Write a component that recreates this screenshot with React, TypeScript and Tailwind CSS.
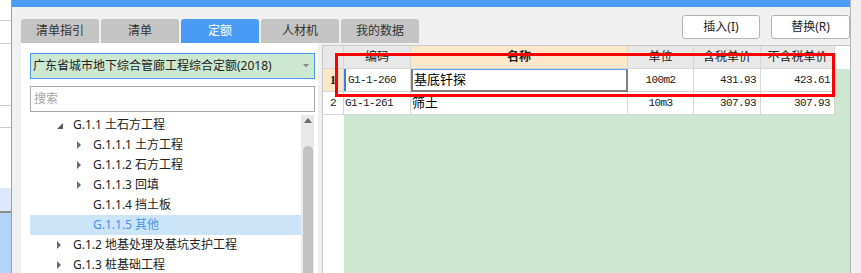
const tabs = ['清单指引', '清单', '定额', '人材机', '我的数据'];

type TreeRow = { level: 1 | 2; arrow: 'open' | 'closed' | 'none'; label: string; selected?: boolean };

const treeRows: TreeRow[] = [
  { level: 1, arrow: 'open', label: 'G.1.1 土石方工程' },
  { level: 2, arrow: 'closed', label: 'G.1.1.1 土方工程' },
  { level: 2, arrow: 'closed', label: 'G.1.1.2 石方工程' },
  { level: 2, arrow: 'closed', label: 'G.1.1.3 回填' },
  { level: 2, arrow: 'none', label: 'G.1.1.4 挡土板' },
  { level: 2, arrow: 'none', label: 'G.1.1.5 其他', selected: true },
  { level: 1, arrow: 'closed', label: 'G.1.2 地基处理及基坑支护工程' },
  { level: 1, arrow: 'closed', label: 'G.1.3 桩基础工程' },
];

const mono = "font-['Liberation_Mono',monospace] text-[11px] tracking-[-0.6px]";

function Arrow({ kind }: { kind: TreeRow['arrow'] }) {
  if (kind === 'open')
    return (
      <svg width="6" height="6" viewBox="0 0 6 6" className="mt-[1px]">
        <polygon points="6,0 6,6 0,6" fill="#5a5a5a" />
      </svg>
    );
  if (kind === 'closed')
    return (
      <svg width="5" height="8" viewBox="0 0 5 8">
        <polygon points="0,0 4,4 0,8" fill="#6a6a6a" />
      </svg>
    );
  return null;
}

export default function App() {
  return (
    <div className="relative flex h-[273px] w-[861px] overflow-hidden bg-[#f0f0f0] font-['Noto_Sans','Noto_Sans_CJK_SC',sans-serif] text-[12px] text-[#222]">
      {/* left edge of the window behind */}
      <div className="flex w-[12px] shrink-0 flex-col border-r border-[#a0a0a0] bg-white">
        <div className="h-[21px] border-b border-[#cdcdcd]" />
        <div className="h-[23px] border-b border-[#cdcdcd]" />
        <div className="h-[62px] border-b border-[#cdcdcd]" />
        <div className="h-[22px] border-b border-[#cdcdcd]" />
        <div className="h-[60px]" />
        <div className="h-[23px] bg-[#dde9fa]" />
        <div className="h-[2px] bg-[#8c8c8c]" />
        <div className="flex-1 bg-[#b5d3f7]" />
      </div>

      <main className="flex min-w-0 flex-1 flex-col">
        <div className="h-[7px] bg-[#4a9bf5]" />

        {/* tabs + buttons */}
        <div className="flex h-[36px] justify-between">
          <div className="flex gap-[2px] pl-[9px] pt-[12px]">
            {tabs.map((t) => (
              <div
                key={t}
                className={
                  t === '定额'
                    ? 'flex h-[24px] w-[78px] items-center justify-center rounded-t-[3px] bg-[#4a9bf5] text-[12px] text-white'
                    : 'flex h-[24px] w-[78px] items-center justify-center rounded-t-[3px] bg-[#c4c4c4] text-[12px] text-[#333]'
                }
              >
                {t}
              </div>
            ))}
          </div>
          <div className="flex gap-[11px] pt-[8px]">
            <button className="flex h-[24px] w-[78px] items-center justify-center rounded-[3px] border border-[#b4b4b4] bg-white text-[12px] text-[#222]">
              插入(I)
            </button>
            <button className="flex h-[24px] w-[79px] items-center justify-center rounded-[3px] border border-[#b4b4b4] bg-white text-[12px] text-[#222]">
              替换(R)
            </button>
          </div>
        </div>

        <div className="flex min-h-0 flex-1 pl-[9px]">
          {/* left panel */}
          <section className="flex w-[297px] shrink-0 flex-col bg-white pl-[9px] pr-[3px] pt-[10px]">
            <div className="flex h-[26px] items-center justify-between border border-[#4a9bf5] bg-[#cde8d0] pl-[2px] pr-[5px]">
              <span>广东省城市地下综合管廊工程综合定额(2018)</span>
              <svg width="6" height="4" viewBox="0 0 6 4">
                <polygon points="0,0 6,0 3,3.5" fill="#8a8a8a" />
              </svg>
            </div>
            <div className="mt-[7px] flex h-[26px] items-center border border-[#a8a8a8] pl-[3px] text-[#a3a3a3]">
              搜索
            </div>
            <div className="mt-[3px] flex min-h-0 flex-1">
              <ul className="w-[271px]">
                {treeRows.map((r) => (
                  <li
                    key={r.label}
                    className={
                      'flex h-[20px] items-center ' +
                      (r.level === 1 ? 'pl-[27px] ' : 'pl-[47px] ') +
                      (r.selected ? 'bg-[#cce4f8] text-[#4a93e6]' : 'text-[#222]')
                    }
                  >
                    <span className="flex w-[16px] items-center">
                      <Arrow kind={r.arrow} />
                    </span>
                    <span className="whitespace-nowrap">{r.label}</span>
                  </li>
                ))}
              </ul>
              <div className="flex w-[13px] flex-col items-center bg-[#e8e8e8]">
                <svg width="8" height="5" viewBox="0 0 8 5" className="mt-[3px]">
                  <polygon points="0,5 8,5 4,0" fill="#6a6a6a" />
                </svg>
                <div className="mt-[23px] w-[10px] flex-1 rounded-t-[5px] bg-[#c2c2c2]" />
              </div>
            </div>
          </section>

          {/* quota table */}
          <section className="ml-[4px] mt-[2px] flex min-w-0 flex-1 flex-col border-l border-t border-[#c8c8c8] bg-[linear-gradient(to_right,#ffffff_21px,#cde7d0_21px)]">
            <div className="flex h-[23px] bg-white text-[12px]">
              <div className="w-[21px] border-b border-r border-[#d6d6d6] bg-[#e8e8e8]" />
              <div className="flex w-[67px] items-center justify-center border-b border-r border-[#d6d6d6] bg-[#e8e8e8]">
                编码
              </div>
              <div className="flex w-[217px] items-center justify-center border-b border-r border-[#d6d6d6] bg-[#fde7cb] font-bold">
                名称
              </div>
              <div className="flex w-[66px] items-center justify-center border-b border-r border-[#d6d6d6] bg-[#e8e8e8]">
                单位
              </div>
              <div className="flex w-[67px] items-center justify-center border-b border-r border-[#d6d6d6] bg-[#e8e8e8]">
                含税单价
              </div>
              <div className="flex w-[74px] items-center justify-center border-b border-r border-[#d6d6d6] bg-[#e8e8e8]">
                不含税单价
              </div>
            </div>

            <div className="flex h-[23px]">
              <div className="flex w-[21px] items-center justify-center border-b border-r border-[#d6d6d6] bg-[#fde7cb] font-['Liberation_Serif',serif] text-[13px] font-bold">
                1
              </div>
              <div className={`flex w-[67px] items-center border-b border-r border-[#d6d6d6] bg-white ${mono}`}>
                <span className="mr-[2px] h-full w-[2px] bg-[#2f7ff0]" />
                G1-1-260
              </div>
              <div className="flex w-[217px] items-center border-x-2 border-b-2 border-t border-x-[#7f7f7f] border-b-[#7f7f7f] border-t-[#5aa2f5] bg-white pl-[1px] text-[13px] text-black">
                基底钎探
              </div>
              <div className={`flex w-[66px] items-center justify-center border-b border-r border-[#d6d6d6] bg-white ${mono}`}>
                100m2
              </div>
              <div className={`flex w-[67px] items-center justify-end border-b border-r border-[#d6d6d6] bg-white pr-[4px] ${mono}`}>
                431.93
              </div>
              <div className={`flex w-[74px] items-center justify-end border-b border-r border-[#d6d6d6] bg-white pr-[4px] ${mono}`}>
                423.61
              </div>
            </div>

            <div className="flex h-[23px]">
              <div className={`flex w-[21px] items-center justify-center border-b border-r border-[#d6d6d6] bg-white ${mono}`}>
                2
              </div>
              <div className={`flex w-[67px] items-center border-b border-r border-[#d6d6d6] bg-white pl-[1px] ${mono}`}>
                G1-1-261
              </div>
              <div className="flex w-[217px] items-center border-b border-r border-[#d6d6d6] bg-white pl-[1px] text-[13px] text-black">
                筛土
              </div>
              <div className={`flex w-[66px] items-center justify-center border-b border-r border-[#d6d6d6] bg-white ${mono}`}>
                10m3
              </div>
              <div className={`flex w-[67px] items-center justify-end border-b border-r border-[#d6d6d6] bg-white pr-[4px] ${mono}`}>
                307.93
              </div>
              <div className={`flex w-[74px] items-center justify-end border-b border-r border-[#d6d6d6] bg-white pr-[4px] ${mono}`}>
                307.93
              </div>
            </div>
          </section>
        </div>
      </main>

      <div className="w-[11px] shrink-0 border-l border-[#b4b4b4]" />

      {/* red annotation box */}
      <div className="pointer-events-none absolute left-[335px] top-[53px] h-[44px] w-[500px] border-[3px] border-[#ff0000]" />
    </div>
  );
}
